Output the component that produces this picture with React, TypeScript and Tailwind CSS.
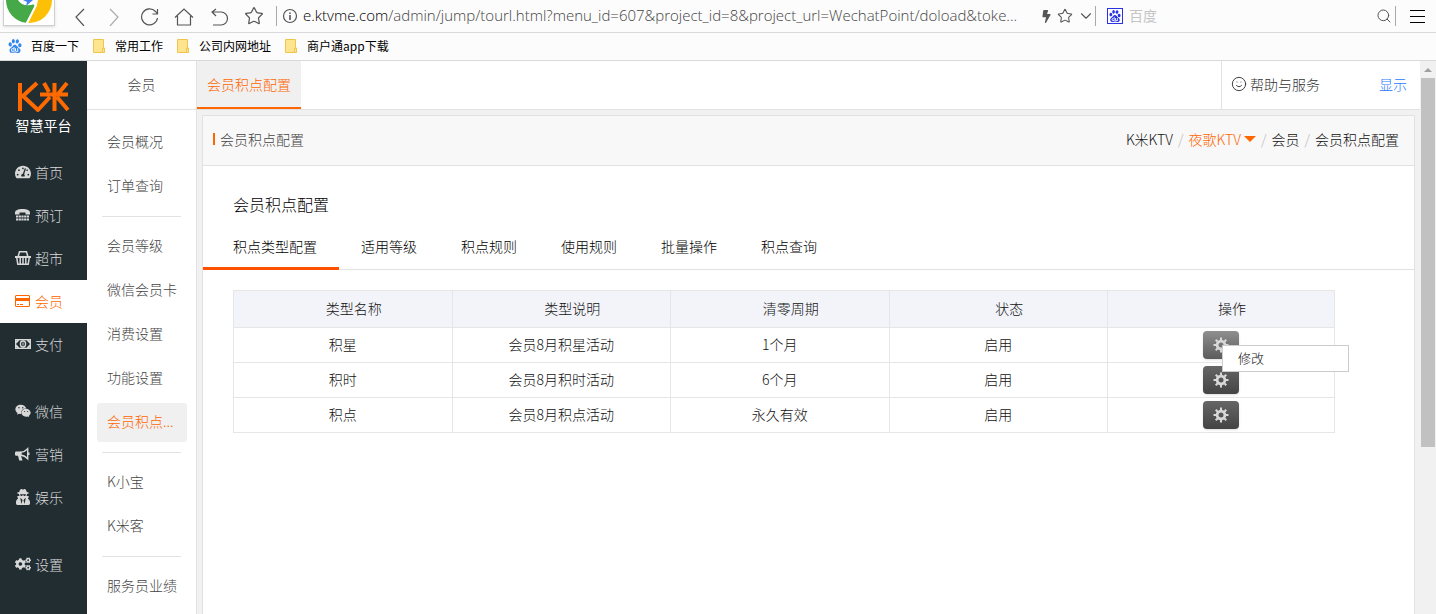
import React from 'react';
import { FaTachometerAlt, FaWeixin, FaUserSecret, FaCogs, FaBolt } from 'react-icons/fa';
import { SiBaidu } from 'react-icons/si';
import { ChevronDown, Search, Smile, Star } from 'lucide-react';

type IconProps = { className?: string };

function PhoneIcon({ className }: IconProps) {
  return (
    <svg viewBox="0 0 16 16" className={className} fill="currentColor" aria-hidden="true">
      <path d="M0 6C0 3 3 2 7.500 2S15 3 15 6v1.500h-4.500V5.500h-6v2H0z" />
      <path d="M1 9.500h13M1 12.500h13" stroke="currentColor" strokeWidth="2" strokeDasharray="2.200 .5" />
    </svg>
  );
}

function BasketIcon({ className }: IconProps) {
  return (
    <svg viewBox="0 0 16 16" className={className} fill="none" stroke="currentColor" aria-hidden="true">
      <path d="M3 7 4.500 1.800h7L13 7" strokeWidth="1.500" />
      <path d="M0 7h16" strokeWidth="2" />
      <path d="M1.800 8l1 6.200h10.400l1-6.200" strokeWidth="1.500" />
      <path d="M5.200 8v6M8 8v6M10.800 8v6" strokeWidth="1.500" />
    </svg>
  );
}

function CardIcon({ className }: IconProps) {
  return (
    <svg viewBox="0 0 16 16" className={className} fill="none" stroke="currentColor" aria-hidden="true">
      <rect x="0.500" y="2.500" width="14" height="11" rx="0.500" />
      <path d="M0 6.500h15" strokeWidth="3" />
      <path d="M2 11.500h2M5 11.500h3" />
    </svg>
  );
}

function MoneyIcon({ className }: IconProps) {
  return (
    <svg viewBox="0 0 16 16" className={className} fill="none" stroke="currentColor" aria-hidden="true">
      <rect x="0.700" y="3.700" width="14.600" height="8.600" strokeWidth="1.400" />
      <path d="M1 6.500 3.500 4M12.500 4 15 6.500M1 9.500 3.500 12M12.500 12 15 9.500" strokeWidth="1.800" />
      <ellipse cx="8" cy="8" rx="2.600" ry="3" strokeWidth="1.300" />
      <path d="M8 6.500v3" />
    </svg>
  );
}

function HornIcon({ className }: IconProps) {
  return (
    <svg viewBox="0 0 16 16" className={className} fill="currentColor" aria-hidden="true">
      <path d="M1.200 5.500H6v4.300l1.500 4.700H4.200L3 9.800H1.200A1.200 1.200 0 0 1 0 8.600V6.700a1.200 1.200 0 0 1 1.200-1.200z" />
      <path d="M6 6.200C8.500 6 11 4.500 12.700 2.700v10C11 10.800 8.500 9.300 6 9.200z" fill="none" stroke="currentColor" strokeWidth="1.400" />
      <path d="M13.800 6.500v2.500" stroke="currentColor" strokeWidth="1.500" />
    </svg>
  );
}

function GearIcon({ className }: IconProps) {
  return (
    <svg viewBox="0 0 16 16" className={className} fill="none" stroke="currentColor" aria-hidden="true">
      <circle cx="8" cy="8" r="3.900" strokeWidth="2.800" />
      <path
        d="M8 .5v3M8 12.500v3M.5 8h3M12.500 8h3M2.700 2.700l2.100 2.100M11.200 11.200l2.100 2.100M2.700 13.300l2.100-2.100M11.200 4.800l2.100-2.100"
        strokeWidth="2"
      />
    </svg>
  );
}

const mainMenu = [
  [
    { label: '首页', icon: FaTachometerAlt },
    { label: '预订', icon: PhoneIcon },
    { label: '超市', icon: BasketIcon },
    { label: '会员', icon: CardIcon, active: true },
    { label: '支付', icon: MoneyIcon },
  ],
  [
    { label: '微信', icon: FaWeixin },
    { label: '营销', icon: HornIcon },
    { label: '娱乐', icon: FaUserSecret },
  ],
  [{ label: '设置', icon: FaCogs }],
];

const subMenu = [
  [{ label: '会员概况' }, { label: '订单查询' }],
  [
    { label: '会员等级' },
    { label: '微信会员卡' },
    { label: '消费设置' },
    { label: '功能设置' },
    { label: '会员积点...', active: true },
  ],
  [{ label: 'K小宝' }, { label: 'K米客' }],
  [{ label: '服务员业绩' }],
];

const tabs = ['积点类型配置', '适用等级', '积点规则', '使用规则', '批量操作', '积点查询'];

const columns = ['类型名称', '类型说明', '清零周期', '状态', '操作'];

const rows = [
  { name: '积星', desc: '会员8月积星活动', period: '1个月', status: '启用', menuOpen: true },
  { name: '积时', desc: '会员8月积时活动', period: '6个月', status: '启用' },
  { name: '积点', desc: '会员8月积点活动', period: '永久有效', status: '启用' },
];

const bookmarks = ['常用工作', '公司内网地址', '商户通app下载'];

function NavIcon({ children, className = '' }: { children: React.ReactNode; className?: string }) {
  return (
    <svg
      viewBox="0 0 20 20"
      className={`h-5 w-5 ${className}`}
      fill="none"
      stroke="currentColor"
      strokeWidth="1.2"
      aria-hidden="true"
    >
      {children}
    </svg>
  );
}

function BrowserLogo() {
  return (
    <div className="h-[26px] w-[52px] shrink-0 overflow-hidden border border-t-0 border-[#cfcfcf] bg-white shadow">
      <svg viewBox="0 0 50 25" className="h-[25px] w-[50px]" aria-hidden="true">
        <path d="M2 0a23 23 0 0 0 20 22.800L31 6 25 0z" fill="#45a948" />
        <path d="M48 0a23 23 0 0 1-24 23L33 5l1-5z" fill="#fdc006" />
        <path d="M32 5 22.500 24" stroke="#fff" strokeWidth="2" />
        <path d="M14 0a11 9 0 0 0 20 0z" fill="#fff" />
        <path d="M19 0h10l-7 6 1-4z" fill="#3f7df0" />
      </svg>
    </div>
  );
}

function BrowserBar() {
  return (
    <header className="shrink-0 bg-[#fcfcfc] font-normal">
      <div className="flex h-[33px] items-start border-b border-[#d9d9d9] pl-[3px]">
        <BrowserLogo />
        <div className="flex min-w-0 flex-1 items-center pt-[3px] text-[#555]">
          <nav className="ml-[14px] flex gap-[15px]">
            <button aria-label="后退">
              <NavIcon><path d="M15 3 7 11l8 9" /></NavIcon>
            </button>
            <button aria-label="前进">
              <NavIcon className="text-[#aaa]"><path d="m6 3 8 8-8 9" /></NavIcon>
            </button>
            <button aria-label="刷新">
              <NavIcon><path d="M18.500 12a8 8 0 1 1-2-6.500l2 2.500M18.500 3v5h-5" /></NavIcon>
            </button>
            <button aria-label="主页">
              <NavIcon><path d="M1 11.500 10 3l9 8.500M3.500 10v9h13v-9" /></NavIcon>
            </button>
            <button aria-label="撤销">
              <NavIcon><path d="M7 3 3 6l4 4M3 6h9a6.500 6.500 0 0 1 0 13H4" /></NavIcon>
            </button>
            <button aria-label="收藏">
              <Star className="h-5 w-5" strokeWidth={1.5} />
            </button>
          </nav>
          <div className="ml-3 h-5 w-px bg-[#aaa]" />
          <NavIcon className="ml-[3px]">
            <circle cx="10" cy="10" r="6.500" />
            <path d="M10 9v5M10 6.500v1.500" strokeWidth="1.600" />
          </NavIcon>
          <label className="ml-[3px] flex min-w-0 flex-1 items-center pb-0.5 font-['Open_Sans',sans-serif] text-[15px] leading-6 font-light">
            <span className="text-black">e.ktvme.com</span>
            <input
              aria-label="地址"
              className="min-w-0 flex-1 bg-transparent text-[#444] outline-none"
              defaultValue="/admin/jump/tourl.html?menu_id=607&project_id=8&project_url=WechatPoint/doload&toke..."
            />
          </label>
          <FaBolt className="h-[13px] w-[13px] shrink-0" aria-hidden="true" />
          <Star className="ml-1 h-4 w-4 shrink-0" strokeWidth={1.6} />
          <ChevronDown className="ml-1 h-[18px] w-[18px] shrink-0" strokeWidth={1.5} />
          <div className="h-5 w-px bg-[#aaa]" />
          <div className="flex w-[299px] shrink-0 items-center">
            <span className="ml-[11px] flex h-4 w-4 items-center justify-center border border-[#2932e1] bg-white">
              <SiBaidu className="h-3 w-3 text-[#2932e1]" />
            </span>
            <input
              aria-label="搜索"
              placeholder="百度"
              className="ml-[6px] min-w-0 flex-1 bg-transparent pb-0.5 text-sm leading-5 outline-none placeholder:text-[#c4c4c4]"
            />
            <Search className="mr-[3px] h-4 w-4" strokeWidth={1.5} />
          </div>
          <div className="h-5 w-px bg-[#aaa]" />
          <button aria-label="菜单" className="mr-[11px] ml-[14px] text-black">
            <svg viewBox="0 0 15 15" className="h-[15px] w-[15px]" stroke="currentColor" aria-hidden="true">
              <path d="M0 1.500h15M0 7.500h15M0 13.500h15" />
            </svg>
          </button>
        </div>
      </div>
      <div className="flex h-7 items-center border-b border-[#d9d9d9] pb-0.5 pl-2 text-xs text-black">
        <a href="#" className="flex items-center">
          <SiBaidu className="h-[14px] w-[14px] text-[#3388f0]" />
          <span className="ml-[9px]">百度一下</span>
        </a>
        {bookmarks.map((name) => (
          <a key={name} href="#" className="ml-[14px] flex items-center">
            <svg viewBox="0 0 12 14" className="h-[14px] w-3" aria-hidden="true">
              <path d="M.5.5h10v8.500h1v4.500H.5z" fill="#ffe48f" stroke="#efc54e" />
              <path d="M9.500 13V9.500h1.500" fill="none" stroke="#efc54e" />
            </svg>
            <span className="ml-[10px]">{name}</span>
          </a>
        ))}
      </div>
    </header>
  );
}

function Sidebar() {
  return (
    <aside className="w-[87px] shrink-0 bg-[#222d32] text-[#d8d8d8]">
      <div className="flex h-[90px] flex-col items-center pt-5">
        <svg
          viewBox="0 0 54 32"
          className="h-8 w-[54px]"
          fill="none"
          stroke="#ff6a00"
          strokeWidth="4"
          strokeLinejoin="round"
          aria-label="K米"
        >
          <path d="M3 2v28M20 2 6 15l15 14 12-13M27 2l5 9M23 13.500h28M37.500 2v28M50 2l-9 11M40 16l11 13" />
        </svg>
        <span className="text-sm leading-6 font-normal text-white">智慧平台</span>
      </div>
      <nav className="flex flex-col gap-6">
        {mainMenu.map((group, i) => (
          <div key={i}>
            {group.map(({ label, icon: Icon, active }) => (
              <a
                key={label}
                href="#"
                className={`flex h-[43px] items-center gap-1 pb-0.5 pl-[15px] text-sm ${active ? 'bg-white text-[#ff6600]' : ''}`}
              >
                <Icon className="h-4 w-4" />
                {label}
              </a>
            ))}
          </div>
        ))}
      </nav>
    </aside>
  );
}

function SubMenu() {
  return (
    <aside className="w-[110px] shrink-0 border-r border-[#e2e2e2] bg-white text-sm text-[#444]">
      <h2 className="flex h-[49px] items-center justify-center border-b border-[#e2e2e2] pb-0.5">会员</h2>
      <nav className="pt-[13px]">
        {subMenu.map((group, i) => (
          <div key={i}>
            {i > 0 && <hr className="mx-[15px] my-[10px] border-[#e2e2e2]" />}
            <div className="flex flex-col gap-[5px] pr-[9px] pl-[10px]">
              {group.map(({ label, active }) => (
                <a
                  key={label}
                  href="#"
                  className={`flex h-[39px] items-center rounded-[3px] px-[10px] pb-1 whitespace-nowrap ${
                    active ? 'bg-[#f0f0f0] text-[#ff6600]' : ''
                  }`}
                >
                  {label}
                </a>
              ))}
            </div>
          </div>
        ))}
      </nav>
    </aside>
  );
}

function PointTable() {
  return (
    <table className="w-full table-fixed border-collapse text-center text-sm text-[#111]">
      <thead>
        <tr className="h-[37px] bg-[#f3f4f9]">
          {columns.map((name) => (
            <th key={name} className="border border-[#e6e6e6] pb-0.5 pl-[22px] font-light last:w-[227px]">
              {name}
            </th>
          ))}
        </tr>
      </thead>
      <tbody>
        {rows.map((row) => (
          <tr key={row.name} className="h-[35px]">
            <td className="border border-[#e6e6e6] pb-0.5">{row.name}</td>
            <td className="border border-[#e6e6e6] pb-0.5">{row.desc}</td>
            <td className="border border-[#e6e6e6] pb-0.5">{row.period}</td>
            <td className="border border-[#e6e6e6] pb-0.5">{row.status}</td>
            <td className="border border-[#e6e6e6]">
              <div className="relative mx-auto h-7 w-9">
                <button
                  aria-label="操作"
                  className={`flex h-7 w-9 items-center justify-center rounded-[4px] bg-linear-to-b text-[#d8d8d8] shadow ${
                    row.menuOpen ? 'from-[#8f8f8f] to-[#5c5c5c]' : 'from-[#666] to-[#444]'
                  }`}
                >
                  <GearIcon className="h-4 w-4" />
                </button>
                {row.menuOpen && (
                  <div className="absolute top-[14px] left-[19px] z-10 flex h-[27px] w-[127px] items-center border border-[#ccc] bg-white pl-[15px] text-[13px]">
                    <button>修改</button>
                  </div>
                )}
              </div>
            </td>
          </tr>
        ))}
      </tbody>
    </table>
  );
}

function Scrollbar() {
  return (
    <div className="flex w-4 shrink-0 flex-col items-center bg-[#f1f1f1]" aria-hidden="true">
      <svg viewBox="0 0 16 17" className="h-[17px] w-4 shrink-0">
        <path d="M4 11h8L8 7z" fill="#a0a0a0" />
      </svg>
      <div className="h-2/3 w-[14px] bg-[#c1c1c1]" />
    </div>
  );
}

export default function App() {
  return (
    <div className="flex h-screen flex-col overflow-hidden font-['Noto_Sans_CJK_SC',sans-serif] font-light">
      <BrowserBar />
      <div className="flex min-h-0 flex-1">
        <Sidebar />
        <SubMenu />
        <div className="flex min-w-0 flex-1 flex-col bg-[#f1f1f1]">
          <div className="flex h-[49px] shrink-0 border-b border-[#e2e2e2] bg-white text-sm">
            <a
              href="#"
              className="flex items-center border-b-2 border-[#ff6600] bg-[#f0f0f0] px-[10px] text-[#ff6600]"
            >
              会员积点配置
            </a>
            <div className="ml-auto flex items-center border-l border-[#e2e2e2] pr-[13px] pb-0.5 pl-[9px] text-[#333]">
              <Smile className="h-4 w-4" strokeWidth={1.4} />
              <a href="#" className="ml-[3px]">帮助与服务</a>
              <a href="#" className="ml-[59px] text-[#1f78ff]">显示</a>
            </div>
          </div>
          <main className="mx-[5px] mt-[5px] flex-1 border border-b-0 border-[#e2e2e2] bg-white">
            <div className="flex h-[50px] items-center justify-between border-b border-[#e2e2e2] bg-[#f8f8f8] pr-[15px] pb-1 pl-[10px] text-sm">
              <h1 className="flex items-center gap-[5px] text-[#444]">
                <span className="h-3 w-[2px] bg-[#ff6600]" />
                会员积点配置
              </h1>
              <nav className="flex items-center gap-[5px] text-[#111]">
                <a href="#">K米KTV</a>
                <span className="text-[#bbb]">/</span>
                <a href="#" className="flex items-center gap-[3px] text-[#ff6600]">
                  夜歌KTV
                  <svg viewBox="0 0 12 6" className="h-[6px] w-3" aria-hidden="true">
                    <path d="M0 0h12L6 6z" fill="currentColor" />
                  </svg>
                </a>
                <span className="text-[#bbb]">/</span>
                <a href="#">会员</a>
                <span className="text-[#bbb]">/</span>
                <span>会员积点配置</span>
              </nav>
            </div>
            <h2 className="pt-[26px] pl-[30px] text-base leading-6 text-black">会员积点配置</h2>
            <div className="mt-2 flex h-[46px] gap-[44px] border-b border-[#e2e2e2] text-sm text-black">
              {tabs.map((tab, i) => (
                <button
                  key={tab}
                  className={`-mb-px border-b-[3px] ${
                    i === 0 ? '-mr-[22px] border-[#ff5000] pr-[22px] pl-[30px]' : 'border-transparent'
                  }`}
                >
                  {tab}
                </button>
              ))}
            </div>
            <div className="mt-5 mr-[79px] ml-[30px]">
              <PointTable />
            </div>
          </main>
        </div>
        <Scrollbar />
      </div>
    </div>
  );
}
